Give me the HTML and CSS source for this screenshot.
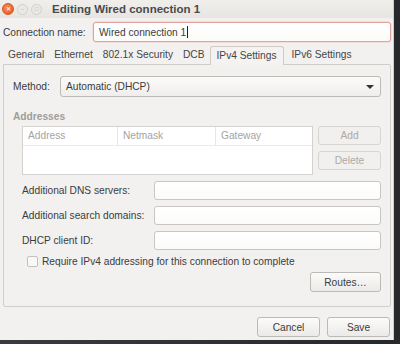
FILE: index.html
```html
<!doctype html>
<html lang="en">
  <head>
    <meta charset="UTF-8" />
    <title>Editing Wired connection 1</title>
    <link rel="stylesheet" href="styles.css">
  </head>
  <body>
    <div class="window">
      <div class="titlebar">
        <span class="wbtn close">&#x2715;</span>
        <span class="wbtn">&#x2013;</span>
        <span class="wbtn">&#x25A1;</span>
        <span class="title">Editing Wired connection 1</span>
      </div>

      <div class="name-row">
        <label for="conn-name">Connection name:</label>
        <div class="entry focus" id="conn-name">Wired connection 1<span class="caret"></span></div>
      </div>

      <div class="tabs">
        <span class="tab">General</span>
        <span class="tab">Ethernet</span>
        <span class="tab">802.1x Security</span>
        <span class="tab">DCB</span>
        <span class="tab active">IPv4 Settings</span>
        <span class="tab">IPv6 Settings</span>
      </div>

      <div class="panel">
        <div class="method-row">
          <span>Method:</span>
          <div class="combo">Automatic (DHCP)<span class="arrow"></span></div>
        </div>

        <div class="section-title">Addresses</div>
        <div class="addresses">
          <div class="table">
            <div class="thead">
              <span>Address</span>
              <span>Netmask</span>
              <span>Gateway</span>
            </div>
          </div>
          <div class="side-buttons">
            <button class="btn disabled">Add</button>
            <button class="btn disabled">Delete</button>
          </div>
        </div>

        <div class="form">
          <div class="form-row">
            <span>Additional DNS servers:</span>
            <div class="entry"></div>
          </div>
          <div class="form-row">
            <span>Additional search domains:</span>
            <div class="entry"></div>
          </div>
          <div class="form-row">
            <span>DHCP client ID:</span>
            <div class="entry"></div>
          </div>
        </div>

        <div class="check-row">
          <span class="checkbox"></span>
          <span>Require IPv4 addressing for this connection to complete</span>
        </div>

        <div class="routes-row">
          <button class="btn routes">Routes…</button>
        </div>
      </div>

      <div class="actions">
        <button class="btn action">Cancel</button>
        <button class="btn action">Save</button>
      </div>
    </div>
  </body>
</html>
```

FILE: styles.css
```css
body {
  margin: 0;
  width: 400px;
  height: 344px;
  overflow: hidden;
  background: linear-gradient(to right, #3b3b3f, #27282c);
  font-family: "Liberation Sans", Arial, sans-serif;
  font-size: 10.2px;
  color: #3c3c3c;
  white-space: nowrap;
}

.window {
  width: 393px;
  height: 340px;
  background: #f2f1f0;
  box-shadow: 1px 0 0 #cfcdc8;
  display: flex;
  flex-direction: column;
}

.titlebar {
  height: 18px;
  flex-shrink: 0;
  display: flex;
  align-items: center;
  padding-left: 2px;
  background: linear-gradient(to bottom, #f0efec, #e7e5e1);
}

.wbtn {
  width: 9px;
  height: 9px;
  border-radius: 50%;
  border: 1px solid #d3d0cb;
  background: #ebe9e6;
  color: #b0ada8;
  font-size: 6px;
  line-height: 9px;
  text-align: center;
  margin-right: 3px;
}

.wbtn.close {
  width: 10px;
  height: 10px;
  line-height: 10px;
  background: radial-gradient(circle at 40% 35%, #f98a5f, #e2531f);
  border-color: #d4571f;
  color: #fbe2d6;
  font-weight: bold;
}

.title {
  margin-left: 7px;
  font-weight: bold;
  font-size: 11.5px;
  color: #4a4a4a;
}

.name-row {
  display: flex;
  align-items: center;
  margin-top: 4px;
  padding-left: 3px;
  padding-right: 2px;
}

.name-row label {
  width: 90px;
  flex-shrink: 0;
}

.entry {
  flex: 1;
  height: 18px;
  border: 1px solid #c3c0bb;
  border-radius: 3px;
  background: linear-gradient(to bottom, #ffffff, #fbfbfa);
  box-shadow: inset 0 1px 1px #e8e6e3;
  display: flex;
  align-items: center;
  padding-left: 5px;
}

.entry.focus {
  border-color: #e3a29b;
  box-shadow: 0 0 0 0.5px #f1c9c3;
}

.caret {
  width: 1px;
  height: 12px;
  background: #222;
  margin-left: 1px;
}

.tabs {
  display: flex;
  flex-shrink: 0;
  margin-top: 4px;
  height: 18px;
  padding-left: 3px;
  align-items: flex-end;
}

.tab {
  height: 18px;
  line-height: 18px;
  padding: 0 5px;
  color: #454545;
}

.tab.active {
  border: 1px solid #cfccc7;
  border-bottom: none;
  border-radius: 3px 3px 0 0;
  background: #f4f3f2;
  padding: 0 6px;
  margin: 0 3px 0 0;
  height: 18px;
  position: relative;
  top: 1px;
}

.panel {
  flex-shrink: 0;
  margin: 0 2px 0 3px;
  height: 230px;
  border: 1px solid #d1cec9;
  border-radius: 0 2px 2px 2px;
  padding: 11px 9px 0 9px;
  display: flex;
  flex-direction: column;
}

.method-row {
  display: flex;
  align-items: center;
}

.method-row > span {
  width: 47px;
  flex-shrink: 0;
}

.combo {
  flex: 1;
  height: 19px;
  border: 1px solid #bebbb6;
  border-radius: 3px;
  background: linear-gradient(to bottom, #fbfbfa, #efeeec);
  display: flex;
  align-items: center;
  padding-left: 5px;
  position: relative;
}

.arrow {
  position: absolute;
  right: 6px;
  top: 8px;
  border-left: 4px solid transparent;
  border-right: 4px solid transparent;
  border-top: 4px solid #333;
}

.section-title {
  margin-top: 14px;
  font-weight: bold;
  color: #a09e9a;
}

.addresses {
  display: flex;
  margin-top: 4px;
  padding-left: 9px;
  height: 49px;
}

.table {
  width: 289px;
  flex-shrink: 0;
  border: 1px solid #d4d2ce;
  background: #ffffff;
}

.thead {
  display: grid;
  grid-template-columns: 95px 98px 1fr;
  height: 18px;
  border-bottom: 1px solid #ecebe9;
}

.thead span {
  padding-left: 5px;
  line-height: 18px;
  color: #a5a39f;
  border-right: 1px solid #e8e6e3;
}

.thead span:last-child {
  border-right: none;
}

.side-buttons {
  margin-left: 5px;
  display: flex;
  flex-direction: column;
  gap: 6px;
}

.btn {
  font-family: inherit;
  font-size: 10.2px;
  color: #3c3c3c;
  border: 1px solid #bdbab5;
  border-radius: 3px;
  background: linear-gradient(to bottom, #fbfbfa, #ebeae8);
  padding: 0;
  height: 19px;
}

.btn.disabled {
  width: 63px;
  color: #acaaa6;
  border-color: #d7d5d1;
  background: #f1f0ee;
}

.form {
  margin-top: 6px;
  padding-left: 9px;
  display: flex;
  flex-direction: column;
  gap: 6px;
}

.form-row {
  display: flex;
  align-items: center;
}

.form-row > span {
  width: 132px;
  flex-shrink: 0;
}

.form-row .entry {
  height: 17px;
  border-color: #c9c6c1;
  box-shadow: none;
}

.check-row {
  display: flex;
  align-items: center;
  margin-top: 6px;
  padding-left: 14px;
}

.checkbox {
  width: 9px;
  height: 9px;
  border: 1px solid #c4c1bc;
  border-radius: 2px;
  background: #f8f8f7;
  margin-right: 4px;
}

.routes-row {
  display: flex;
  justify-content: flex-end;
  margin-top: 5px;
}

.btn.routes {
  width: 71px;
  height: 20px;
}

.actions {
  display: flex;
  justify-content: flex-end;
  gap: 7px;
  margin-top: 10px;
  padding-right: 3px;
}

.btn.action {
  width: 63px;
  height: 20px;
}
```
